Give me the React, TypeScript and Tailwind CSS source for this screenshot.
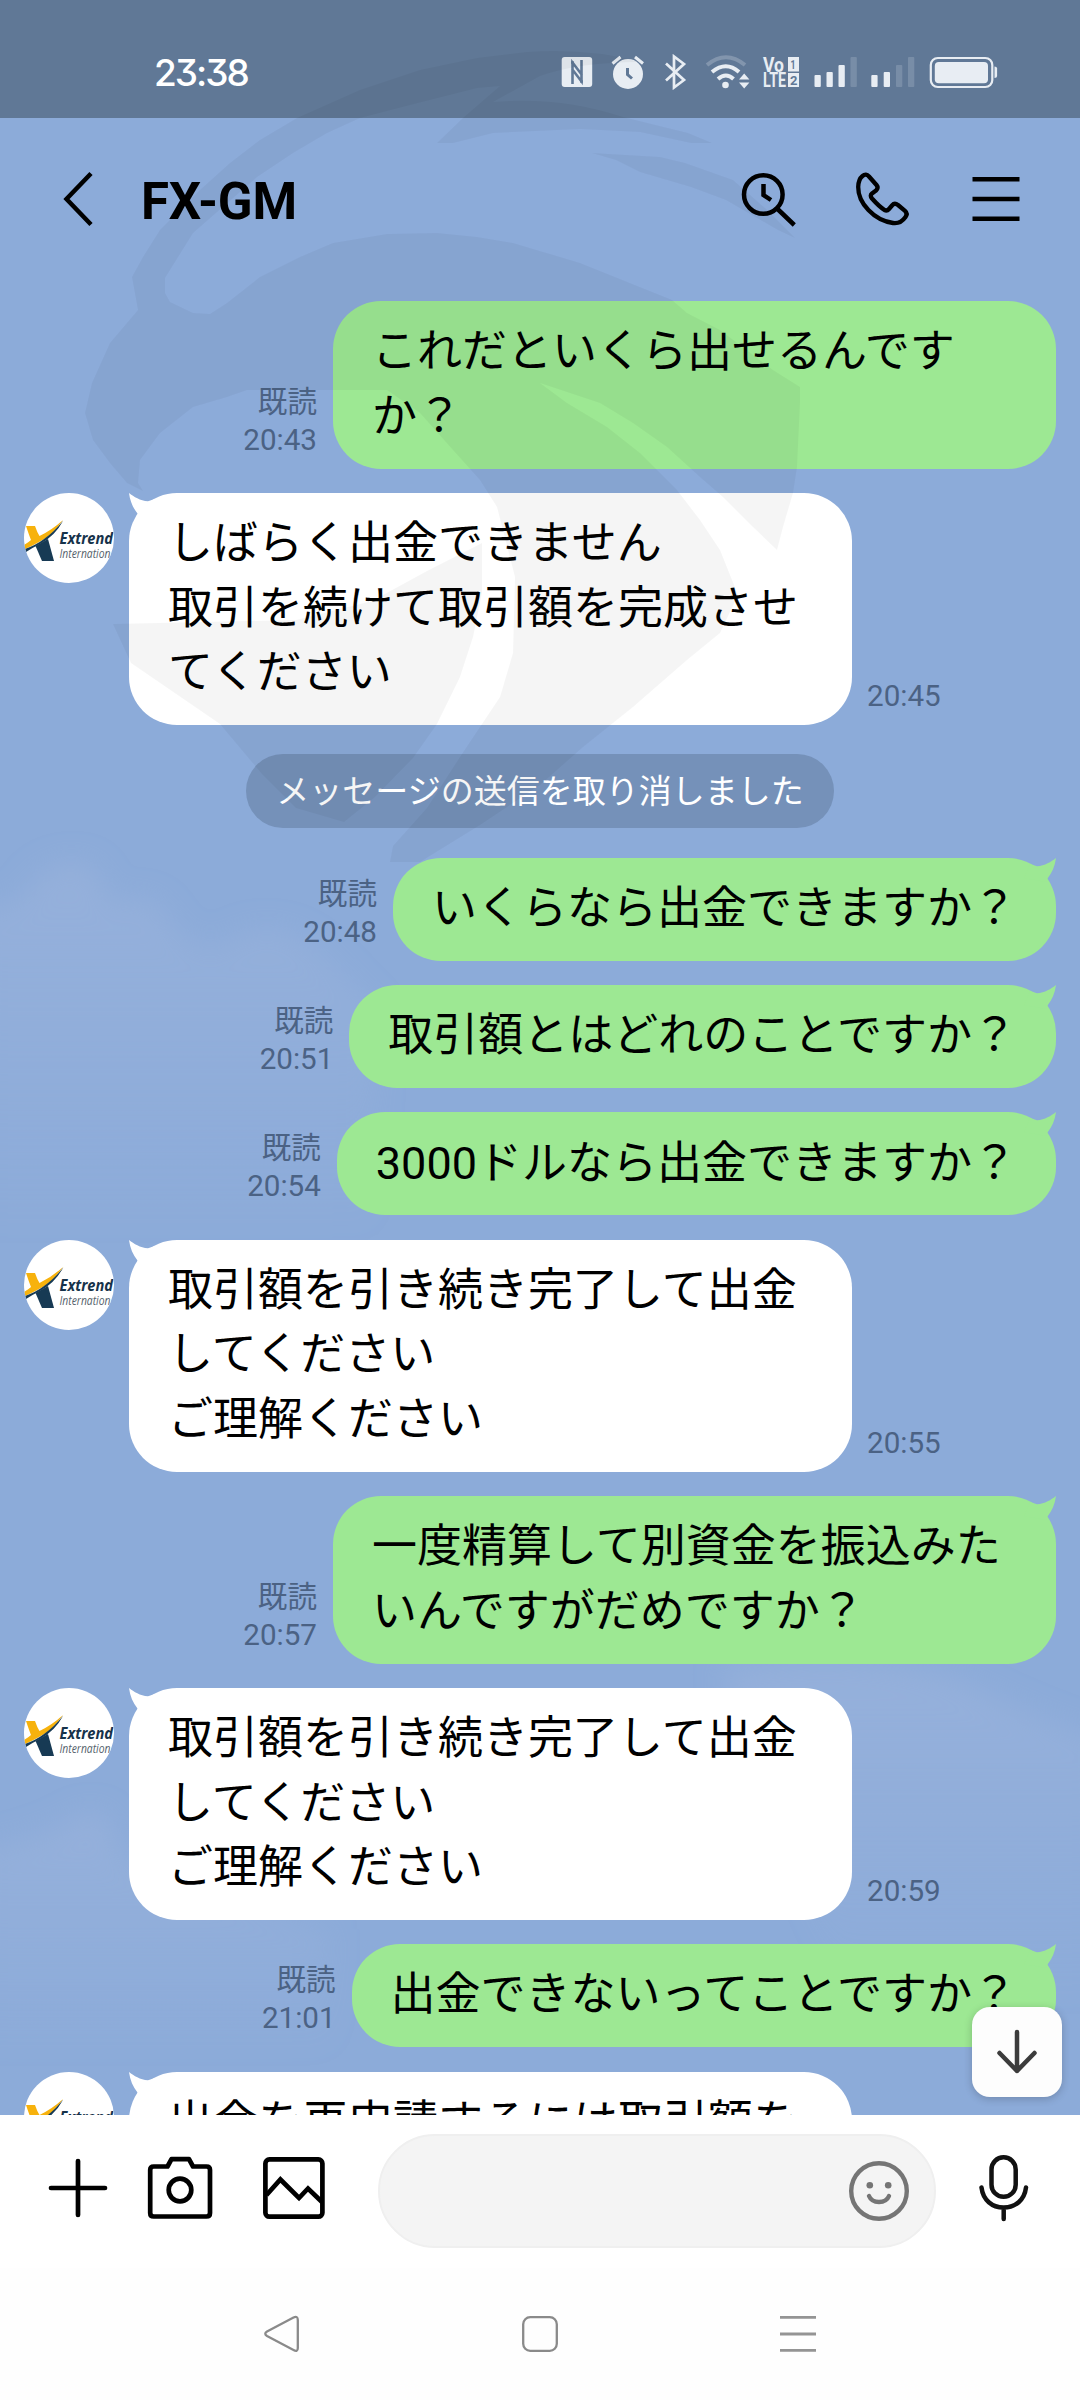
import { clsx } from "clsx";

type Message =
  | { kind: "sent"; lines: string[]; time: string; tail?: boolean; wide?: boolean }
  | { kind: "received"; lines: string[]; time?: string }
  | { kind: "notice"; text: string };

const messages: Message[] = [
  { kind: "sent", lines: ["これだといくら出せるんです", "か？"], time: "20:43", tail: false, wide: true },
  { kind: "received", lines: ["しばらく出金できません", "取引を続けて取引額を完成させ", "てください"], time: "20:45" },
  { kind: "notice", text: "メッセージの送信を取り消しました" },
  { kind: "sent", lines: ["いくらなら出金できますか？"], time: "20:48" },
  { kind: "sent", lines: ["取引額とはどれのことですか？"], time: "20:51" },
  { kind: "sent", lines: ["3000ドルなら出金できますか？"], time: "20:54" },
  { kind: "received", lines: ["取引額を引き続き完了して出金", "してください", "ご理解ください"], time: "20:55" },
  { kind: "sent", lines: ["一度精算して別資金を振込みた", "いんですがだめですか？"], time: "20:57", wide: true },
  { kind: "received", lines: ["取引額を引き続き完了して出金", "してください", "ご理解ください"], time: "20:59" },
  { kind: "sent", lines: ["出金できないってことですか？"], time: "21:01" },
  { kind: "received", lines: ["出金を再申請するには取引額を"] },
];

function StatusIcons() {
  return (
    <div className="flex text-[#e8edf3]">
      <svg className="h-9 w-8" viewBox="561 54 32 36">
        <rect x="561.7" y="57" width="30.5" height="30" rx="3" fill="currentColor" />
        <path d="M572.500 84V62.500L582 75M581.500 60V81.500L572 69M571 62.500h3M580 81.500h3" fill="none" stroke="#607896" strokeWidth="2.600" />
      </svg>
      <svg className="ml-[18px] h-9 w-[34px]" viewBox="611 54 34 36" fill="none" stroke="currentColor" strokeWidth="3">
        <circle cx="628" cy="74" r="15" fill="currentColor" stroke="none" />
        <path d="M612.5 63.5l8-6.5M643 63.5l-8-6.5" />
        <path d="M627.5 68v6.5l4.5 4" stroke="#607896" />
      </svg>
      <svg className="ml-[19px] h-9 w-[23px]" viewBox="664 54 23 36" fill="none" stroke="currentColor" strokeWidth="2.7">
        <path d="M666 63.5l18 16.5-10 7.5V56.5l10 7.5-18 16.5" />
      </svg>
      <svg className="ml-[18px] h-9 w-[45px]" viewBox="705 54 45 36" fill="none" stroke="currentColor" strokeWidth="4">
        <path d="M707 65Q726 49.500 745 65" opacity=".25" />
        <path d="M712 72Q726 60.500 739 72" />
        <path d="M718 79Q726 72 733.500 79" />
        <circle cx="725.500" cy="85" r="3.300" fill="currentColor" stroke="none" />
        <path d="M739 79.500l5.200-6 5.200 6zM739 82.500l5.200 6 5.200-6z" fill="currentColor" stroke="none" />
      </svg>
      <svg className="ml-3 h-9 w-[38px]" viewBox="762 54 38 36" fill="currentColor" fontFamily="Roboto" fontWeight="700">
        <text x="763" y="71.500" fontSize="19.500" textLength="21" lengthAdjust="spacingAndGlyphs">Vo</text>
        <text x="763" y="87" fontSize="19.500" textLength="23" lengthAdjust="spacingAndGlyphs">LTE</text>
        <rect x="788" y="57" width="11" height="14.500" />
        <rect x="788" y="73" width="11" height="14" />
        <text x="790.500" y="69" fontSize="13" fill="#607896" textLength="5" lengthAdjust="spacingAndGlyphs">1</text>
        <text x="790" y="84.500" fontSize="13" fill="#607896">2</text>
      </svg>
      <svg className="ml-[14px] h-9 w-[44px]" viewBox="814 54 44 36" fill="currentColor">
        <rect x="814.500" y="75" width="6.300" height="12" rx="1" />
        <rect x="826.500" y="72" width="6.300" height="15" rx="1" />
        <rect x="838.500" y="65" width="6.300" height="22" rx="1" />
        <rect x="850.500" y="57" width="6.300" height="30" rx="1" opacity=".18" />
      </svg>
      <svg className="ml-[13px] h-9 w-[44px]" viewBox="871 54 44 36" fill="currentColor">
        <rect x="871.300" y="75" width="6.300" height="12" rx="1" />
        <rect x="883.700" y="72" width="6.300" height="15" rx="1" />
        <rect x="896" y="65" width="6.300" height="22" rx="1" opacity=".18" />
        <rect x="908" y="57" width="6.300" height="30" rx="1" opacity=".18" />
      </svg>
      <svg className="ml-[14px] h-9 w-[69px]" viewBox="929 54 69 36" fill="currentColor">
        <rect x="930.800" y="58" width="61.500" height="29" rx="7" fill="none" stroke="currentColor" strokeWidth="2.200" />
        <rect x="934.800" y="62" width="53.200" height="21.300" rx="4" />
        <path d="M994.500 66.500q2.600 0 2.600 2v7.500q0 2-2.600 2z" />
      </svg>
    </div>
  );
}

function ChatHeader() {
  return (
    <header className="flex h-[162px] shrink-0 items-center pl-[62px] pr-[58px]">
      <svg className="h-[60px] w-9" viewBox="62 169 36 60" fill="none" stroke="#000" strokeWidth="4.500">
        <path d="M91 173.500L66.500 199 91 224.500" />
      </svg>
      <h1 className="ml-[43px] mt-[4px] text-[51px] font-bold leading-none tracking-[-0.2px] text-black">FX-GM</h1>
      <div className="ml-auto flex">
        <svg className="h-[60px] w-[60px]" viewBox="738 169 60 60" fill="none" stroke="#000" strokeWidth="4.500">
          <circle cx="763.300" cy="194.500" r="19.300" />
          <path d="M777 208.500l17.300 16.500M763.500 184v11l7.500 5" />
        </svg>
        <svg className="ml-[54px] h-[60px] w-[60px]" viewBox="852 169 60 60" fill="none" stroke="#000" strokeWidth="4.300" strokeLinejoin="round">
          <path d="M862.500 176Q866 173 869 176.500L876.500 185Q879 188 876 190.500L872 193.500Q869.500 195.500 872 198.500C876 203 880 207 884.500 210Q887 211.300 889 209L892 205.500Q894.500 202.500 898 205L905 210.800Q908 213.500 905.500 217C902 222 898 223.700 893 223C874 220.500 858 203 858.200 187C858.300 182 860 178 862.500 176Z" />
        </svg>
        <svg className="ml-[58px] h-[60px] w-[52px]" viewBox="970 169 52 60" fill="none" stroke="#000" strokeWidth="4.600">
          <path d="M972.500 179.300h47M972.500 199h47M972.500 218.700h47" />
        </svg>
      </div>
    </header>
  );
}

function Avatar() {
  return (
    <svg className="size-[90px] shrink-0 rounded-full bg-white" viewBox="0 0 90 90">
      <path d="M2 33h9q2 6 4.500 10Q28 37 39 27 28 43 15 49 8 53 1 56L0 52q5-3 7-5Q5 42 2 33z" fill="#f7b20d" />
      <path d="M39.300 27.500Q31 43 16 51 8 55 2 59L1 56Q12 52 20 46 30 39 39.300 27.500z" fill="#173a54" />
      <path d="M11.500 53L24 46l6 22H18z" fill="#173a54" />
      <text x="35.500" y="51" fontSize="16" fontWeight="700" fontStyle="italic" fontFamily="Open Sans" fill="#16324a" textLength="53.500" lengthAdjust="spacingAndGlyphs">Extrend</text>
      <text x="35.500" y="65" fontSize="12" fontStyle="italic" fontFamily="Open Sans" fill="#555f6c" textLength="51" lengthAdjust="spacingAndGlyphs">Internation</text>
    </svg>
  );
}

function Bubble({ lines, sent, tail = true, wide }: { lines: string[]; sent: boolean; tail?: boolean; wide?: boolean }) {
  return (
    <div
      className={clsx(
        "relative rounded-[48px] px-[39px] pb-[19.250px] pt-[19.250px] text-[45px] leading-[64.500px] text-black",
        sent ? "bg-[#9de893]" : "bg-white",
        (wide || !sent) && "w-[723px]",
      )}
    >
      {tail && (
        <svg
          className={clsx("absolute top-0 h-6 w-8", sent ? "right-0 -scale-x-100 text-[#9de893]" : "left-0 text-white")}
          viewBox="0 0 32 24"
          fill="currentColor"
        >
          <path d="M0 0C5 4 11 7.500 19 8.300L26 6 32 20 10 24 8.500 20.500C4 15 1 8 0 0z" />
        </svg>
      )}
      {lines.map((line) => (
        <p key={line} className="whitespace-nowrap">{line}</p>
      ))}
    </div>
  );
}

function MessageRow({ message }: { message: Message }) {
  if (message.kind === "notice") {
    return (
      <div className="my-[5px] flex h-[74px] w-[588px] items-center justify-center self-center rounded-full bg-[#7591b9] text-[33px] leading-none text-white">
        {message.text}
      </div>
    );
  }
  if (message.kind === "sent") {
    return (
      <div className="flex items-end justify-end gap-4">
        <div className="pb-[10px] text-right text-[29.600px] leading-[38px] text-[#4b6284]">
          <p>既読</p>
          <p>{message.time}</p>
        </div>
        <Bubble sent lines={message.lines} tail={message.tail} wide={message.wide} />
      </div>
    );
  }
  return (
    <div className="flex items-start">
      <Avatar />
      <div className="ml-[15px] flex items-end gap-[15px]">
        <Bubble sent={false} lines={message.lines} />
        {message.time && <span className="pb-[10px] text-[29.600px] leading-[38px] text-[#4b6284]">{message.time}</span>}
      </div>
    </div>
  );
}

function Clouds() {
  return (
    <svg className="absolute inset-0 h-[2115px] w-[1080px]" viewBox="0 0 1080 2115">
      <defs>
        <filter id="soft" x="-20%" y="-20%" width="140%" height="140%">
          <feGaussianBlur stdDeviation="14" />
        </filter>
        <linearGradient id="fade" x1="0" y1="0" x2="0" y2="1">
          <stop offset="0" stopColor="#9ab3dc" stopOpacity=".65" />
          <stop offset="1" stopColor="#9ab3dc" stopOpacity="0" />
        </linearGradient>
      </defs>
      <g fill="url(#fade)" filter="url(#soft)">
        <path d="M-30 910L20 900Q40 860 80 862 105 870 110 905 150 885 170 920 190 950 220 945 270 910 320 950L380 1010 370 1230H-30z" />
        <path d="M720 1670Q860 1650 960 1680 1040 1720 1110 1740V2000H850z" />
        <path d="M-30 1850Q40 1840 80 1815 110 1800 125 1860L330 1930V2050H-30z" />
      </g>
    </svg>
  );
}

// Faint bird emblem laid over the upper half of the screen
function Watermark() {
  return (
    <svg className="pointer-events-none absolute left-0 top-0 h-[900px] w-[1080px]" viewBox="0 0 1080 900" fill="#000" fillOpacity=".04">
      <path d="M132 277L143 257 160 230 200 190 230 163 260 140 297 118 360 90 420 70 477 58 527 52Q590 48 640 62 580 62 540 76L493 102Q560 96 623 117L688 133 712 143H691L640 132 580 129 493 133 453 143H437L463 118 500 86 477 88 410 105 360 118 327 133 293 153 257 177 193 233 165 278V293L170 302 193 313 210 314 227 303 260 277 300 257 333 243 387 234 437 233 477 237 513 243 580 263 672 300 687 313 720 330 773 370 800 387V403L797 467 793 493 783 527 777 550 753 527 723 497 700 477 667 447 633 423 600 403 540 383 567 403 607 427 640 453 677 490 700 520 720 550 738 595 720 633 687 660 633 707 583 747 540 785 480 825 420 862H390L393 846 427 808 460 757 480 727 500 697 513 653 515 577 497 507 480 480 453 450 420 413 387 390H247L227 397 193 407 160 433 140 460 138 483 143 491 127 483 110 463 93 440 85 413 92 383 110 343 138 310z" />
      <path d="M592 153L660 157 685 163 733 180 765 208 795 238 778 230 726 200 691 187 640 172 616 160z" />
      <path d="M113 624L296 620 372 601 427 571 482 543V593L473 637 460 677 437 724 413 758 375 797 344 822 296 808 262 774 220 724 131 663z" />
    </svg>
  );
}

function ComposeBar() {
  return (
    <div className="relative flex h-[153px] shrink-0 items-start bg-white pl-[46px] pt-[19px] text-black">
      <svg className="mt-[22px] h-16 w-16" viewBox="46 2156 64 64" fill="none" stroke="currentColor" strokeWidth="4.700" strokeLinecap="round">
        <path d="M51 2188h54M78 2161v54" />
      </svg>
      <svg className="ml-[35px] mt-[20px] h-[68px] w-[70px]" viewBox="145 2154 70 68" fill="none" stroke="currentColor" strokeWidth="4.700" strokeLinejoin="round">
        <path d="M150.200 2170q0-3.500 3.500-3.500h13.800l4-7.300h17.500l4 7.300h13.500q3.500 0 3.500 3.500v43q0 3.500-3.500 3.500h-52.800q-3.500 0-3.500-3.500z" />
        <circle cx="180" cy="2190" r="11.300" />
      </svg>
      <svg className="ml-[45px] mt-[20px] h-[68px] w-[68px]" viewBox="260 2154 68 68" fill="none" stroke="currentColor" strokeWidth="4.700">
        <rect x="265.400" y="2159.400" width="57" height="57.300" rx="4" />
        <path d="M266.500 2195L280.400 2179.500 299 2198 308 2188.500 322 2202" />
      </svg>
      <div className="ml-[50px] flex h-[114px] w-[558px] items-center justify-end rounded-full border-2 border-[#efefef] bg-[#f4f4f4] pr-[23px]">
        <svg className="h-16 w-16" viewBox="847 2159 64 64" fill="none" stroke="#757575" strokeWidth="4.400" strokeLinecap="round">
          <circle cx="879" cy="2191" r="27.800" />
          <circle cx="869.800" cy="2185.200" r="3.300" fill="#757575" stroke="none" />
          <circle cx="888.200" cy="2185.200" r="3.300" fill="#757575" stroke="none" />
          <path d="M869 2196Q871.500 2202 879 2202T889 2196" />
        </svg>
      </div>
      <svg className="ml-10 mt-[18px] h-[72px] w-14" viewBox="976 2152 56 72" fill="none" stroke="#111" strokeWidth="4.500" strokeLinecap="round">
        <rect x="991.500" y="2157.300" width="24.200" height="39.500" rx="12.100" />
        <path d="M981.500 2187.500C983 2200 992 2207.500 1003.700 2207.500S1024.500 2200 1026 2187.500M1003.700 2208v11" />
      </svg>
    </div>
  );
}

function NavBar() {
  return (
    <nav className="flex flex-1 items-start bg-[#fefefe] pl-[262px] pt-[46px]">
      <svg className="h-10 w-10" viewBox="262 2314 40 40" fill="none" stroke="#8a8a8a" strokeWidth="2.300" strokeLinejoin="round">
        <path d="M267 2331.500L293.500 2317.500Q297.800 2315.500 297.800 2320V2348Q297.800 2352.500 293.500 2350L267 2336Q263.500 2333.700 267 2331.500z" />
      </svg>
      <svg className="ml-[218px] h-10 w-10" viewBox="520 2314 40 40" fill="none" stroke="#8a8a8a" strokeWidth="2.300">
        <rect x="523.200" y="2317.200" width="33.600" height="33.600" rx="7" />
      </svg>
      <svg className="ml-[218px] h-10 w-10" viewBox="778 2314 40 40" fill="none" stroke="#949494" strokeWidth="2.800">
        <path d="M780 2317.400h36M780 2334h36M780 2350.400h36" />
      </svg>
    </nav>
  );
}

export default function App() {
  return (
    <div className="relative flex h-[2400px] w-[1080px] flex-col overflow-hidden bg-[#8cabd9] font-[Roboto,'Noto_Sans_CJK_JP',sans-serif]">
      <Clouds />
      <div className="relative flex h-[118px] shrink-0 items-start justify-between bg-[#607896] pl-[154px] pr-[82px] pt-[54px]">
        <span className="font-[Inter,sans-serif] text-[37px] font-medium leading-[37px] tracking-[-2px] text-white [font-feature-settings:'cv09']">23:38</span>
        <StatusIcons />
      </div>
      <div className="relative flex h-[1997px] shrink-0 flex-col overflow-hidden">
        <ChatHeader />
        <main className="flex shrink-0 flex-col gap-[24.360px] pl-6 pr-6 pt-[21px]">
          {messages.map((message, i) => (
            <MessageRow key={i} message={message} />
          ))}
        </main>
        <button className="absolute bottom-[18px] right-[18px] flex size-[90px] items-center justify-center rounded-[18px] bg-[#fdfdfd] shadow-[0_2px_8px_rgba(0,0,0,0.2)]">
          <svg className="size-[50px]" viewBox="992 2027 50 50" fill="none" stroke="#3c3c3c" strokeWidth="4.500" strokeLinecap="round" strokeLinejoin="round">
            <path d="M1017 2032v39M999.500 2053l17.500 18 17.500-18" />
          </svg>
        </button>
      </div>
      <ComposeBar />
      <NavBar />
      <Watermark />
    </div>
  );
}
